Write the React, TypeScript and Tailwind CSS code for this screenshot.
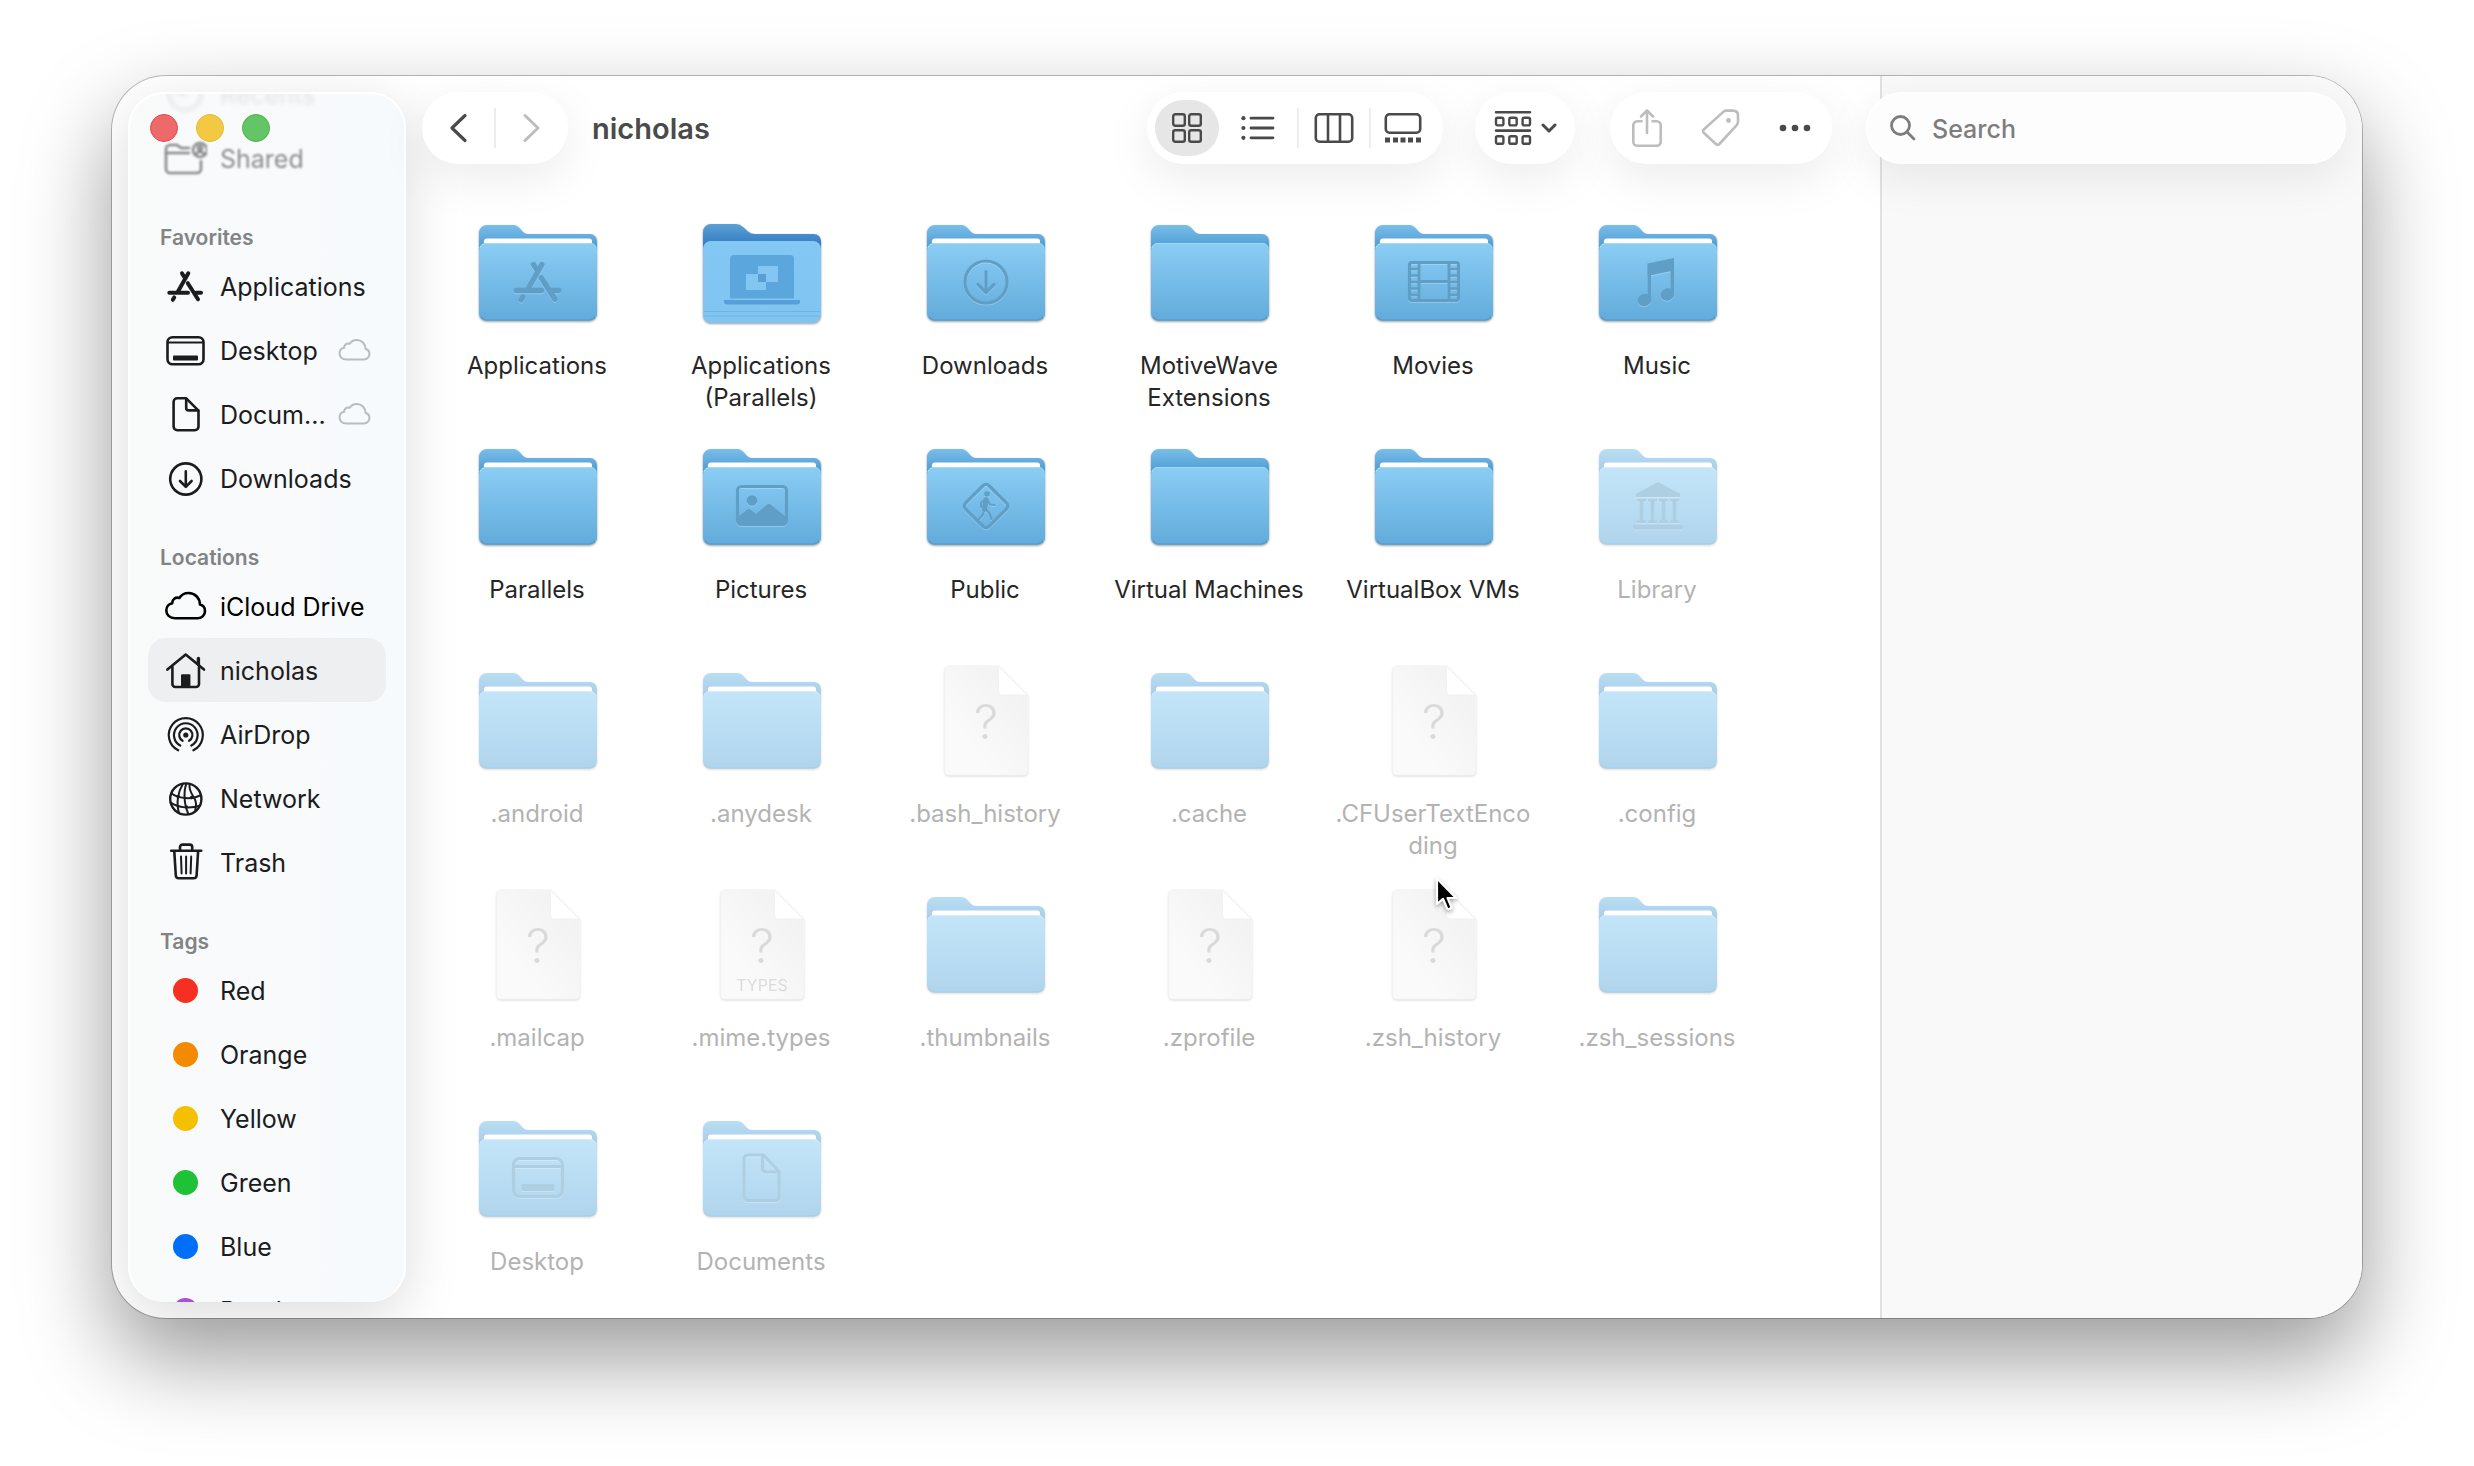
import React from 'react';

type GlyphName =
  | 'recents'
  | 'shared'
  | 'apps'
  | 'desktop'
  | 'document'
  | 'download'
  | 'cloud'
  | 'home'
  | 'airdrop'
  | 'network'
  | 'trash';

const glyphs: Record<GlyphName, React.ReactNode> = {
  recents: (
    <>
      <circle cx="22" cy="22" r="16" />
      <path d="M22 12v10h-8" />
    </>
  ),
  shared: (
    <>
      <path d="M26 12H18l-4-3H7a4 4 0 0 0-4 4v20a4 4 0 0 0 4 4h27a4 4 0 0 0 4-4V25" />
      <path d="M3 17h23" />
      <circle cx="37" cy="14" r="7" />
      <circle cx="37" cy="12" r="2" />
      <path d="M33 18c2-3 6-3 8 0" />
    </>
  ),
  apps: (
    <g strokeWidth="4">
      <path d="M25.3 9.3L14.7 28" />
      <path d="M19 9.3l2.7 4.2M24.8 19.2L35 35.3" />
      <path d="M6.3 28.7H25M33 28.7h5" />
      <path d="M11.2 33.4l-1.4 2.4" />
    </g>
  ),
  desktop: (
    <>
      <rect x="4.5" y="9.2" width="36" height="27" rx="5" />
      <path d="M5 14.6h35" strokeWidth="2" />
      <rect x="10" y="27.5" width="25" height="5" rx="1" fill="currentColor" stroke="none" />
    </>
  ),
  document: (
    <>
      <path d="M14.2 6.3h9L35.5 18.6v16a3.6 3.6 0 0 1-3.6 3.6H14.2a3.6 3.6 0 0 1-3.6-3.6V9.9a3.6 3.6 0 0 1 3.6-3.6z" />
      <path d="M23.2 6.8V16a2.4 2.4 0 0 0 2.4 2.4h9.6" />
    </>
  ),
  download: (
    <>
      <circle cx="22.8" cy="23" r="15.6" />
      <path d="M22.8 15.4v15M17 25l5.8 5.8 5.8-5.8" />
    </>
  ),
  cloud: (
    <path d="M12 34.2C6.5 34.2 3.3 30.6 3.3 26.6c0-4 2.7-6.8 5.9-7.4-.2-3.7 3.2-6.6 7.2-5.2C18.2 11 21.6 9 25.5 9 32 9 36.8 13.7 37 20.6c3 .7 5 3.4 5 6.6 0 3.8-3 7-7 7z" />
  ),
  home: (
    <>
      <path d="M4.4 21.6L22.7 6.6 41 21.6" />
      <path d="M9.4 19v17a3 3 0 0 0 3 3H33a3 3 0 0 0 3-3V19" />
      <path d="M35.4 10.5v6" strokeWidth="3.4" />
      <path d="M18 27.3a1 1 0 0 1 1-1h7.4a1 1 0 0 1 1 1V39H18z" fill="currentColor" stroke="none" />
    </>
  ),
  airdrop: (
    <g strokeWidth="2.2">
      <path d="M15.2 38.3a17 17 0 1 1 15.2 0" />
      <path d="M17.3 33.5a11.8 11.8 0 1 1 11 0" />
      <path d="M19.6 28.8a6.6 6.6 0 1 1 6.4 0" />
      <circle cx="22.8" cy="23" r="2.6" fill="currentColor" stroke="none" />
    </g>
  ),
  network: (
    <g strokeWidth="2">
      <circle cx="22.8" cy="23" r="15.6" strokeWidth="2.4" />
      <path d="M8.5 17.5c8 5.6 21 6 28.8 1.8" />
      <path d="M7.6 26.6c8 5.4 20 6.4 29.8 2.8" />
      <path d="M20 7.8c-5 7.8-7 19.4-4 29" />
      <path d="M23.4 7.6c-2.6 6.6-3 19.6 2 30.4" />
      <path d="M26.6 8c-1 6.6 2.8 10.6 5 14.6 1.8 3.6 2 7 .6 11.4" />
      <circle cx="15.2" cy="20.8" r="1.8" fill="currentColor" stroke="none" />
      <circle cx="28.6" cy="21.6" r="1.8" fill="currentColor" stroke="none" />
      <circle cx="23.4" cy="31" r="1.8" fill="currentColor" stroke="none" />
    </g>
  ),
  trash: (
    <>
      <path d="M8.2 10.7h30" />
      <path d="M17 10.4V7a2.4 2.4 0 0 1 2.4-2.4h7.4A2.4 2.4 0 0 1 29.2 7v3.4" />
      <path d="M11.3 11.5l1.5 24a3 3 0 0 0 3 2.8h14.8a3 3 0 0 0 3-2.8l1.5-24" />
      <path d="M18 16.6l.6 16.8M23.1 16.6v16.8M28.2 16.6l-.6 16.8" strokeWidth="2" />
    </>
  ),
};

function Glyph({ name, className }: { name: GlyphName; className: string }) {
  return (
    <svg
      viewBox="0 0 44 44"
      className={className}
      fill="none"
      stroke="currentColor"
      strokeWidth="2.6"
      strokeLinecap="round"
      strokeLinejoin="round"
      aria-hidden="true"
    >
      {glyphs[name]}
    </svg>
  );
}

type Emblem = 'apps' | 'download' | 'film' | 'music' | 'picture' | 'walk' | 'library' | 'desktop' | 'document';

const emblems: Record<Emblem, React.ReactNode> = {
  apps: (
    <g transform="translate(35 43) scale(1.34)" strokeWidth="4">
      <path d="M25.3 9.3L14.7 28M19 9.3l2.7 4.2M24.8 19.2L35 35.3M6.3 28.7H25M33 28.7h5M11.2 33.4l-1.4 2.4" />
    </g>
  ),
  download: (
    <>
      <circle cx="65" cy="73" r="21" />
      <path d="M65 62.5v20.5M57 75.5l8 8 8-8" />
    </>
  ),
  film: (
    <>
      <rect x="40.5" y="53.5" width="49" height="38" rx="2.5" />
      <path d="M50 54v37M80 54v37M50 72.5h30" />
      <path d="M41 60h9M41 66.5h9M41 73h9M41 79.5h9M41 86h9M80 60h9M80 66.5h9M80 73h9M80 79.5h9M80 86h9" strokeWidth="2.4" />
    </>
  ),
  music: (
    <g fill="currentColor" stroke="none">
      <path d="M54.5 54.5L81 49v12.5L54.5 67z" />
      <path d="M54.5 55H58v34h-3.5zM77.5 52H81v32h-3.5z" />
      <ellipse cx="51.5" cy="91" rx="7" ry="6" transform="rotate(-20 51.5 91)" />
      <ellipse cx="74.5" cy="85.5" rx="7" ry="6" transform="rotate(-20 74.5 85.5)" />
    </g>
  ),
  picture: (
    <>
      <rect x="40.5" y="53.5" width="49" height="38" rx="4" />
      <circle cx="55" cy="67.5" r="5.2" fill="currentColor" stroke="none" />
      <path
        d="M41 84l9.500-7.500q1.500-1 3 .2l5.500 4.300 11-9.200q2-1.400 4 0L89 84v5q0 2.500-2.500 2.500h-43Q41 91.500 41 89z"
        fill="currentColor"
        stroke="none"
      />
    </>
  ),
  walk: (
    <>
      <rect x="48.5" y="56.5" width="33" height="33" rx="4" transform="rotate(45 65 73)" />
      <circle cx="66" cy="61" r="2.8" fill="currentColor" stroke="none" />
      <path d="M65 67l-1.500 9" strokeWidth="5.5" />
      <path d="M64 66.500l-4 3v4.500M67 68l2 3.500 4.500.5" strokeWidth="2" />
      <path d="M63 77l-1 4.500-4 4.500M65 76.500l3.500 4 2 5.500" strokeWidth="2.4" />
    </>
  ),
  library: (
    <g fill="currentColor" stroke="none">
      <path d="M64 49.500q1-.6 2 0l21 11.500q1 2.500-1 3H44q-2-.5-1-3z" />
      <rect x="40" y="92" width="50" height="4.5" rx="2" />
      <path d="M44 66h9v2.500h-2.500v19H53V90h-9v-2.500h2.500v-19H44zM55 66h9v2.500h-2.500v19H64V90h-9v-2.500h2.500v-19H55zM66 66h9v2.500h-2.500v19H75V90h-9v-2.500h2.500v-19H66zM77 66h9v2.500h-2.500v19H86V90h-9v-2.500h2.500v-19H77z" />
    </g>
  ),
  desktop: (
    <>
      <rect x="40.5" y="53.5" width="49" height="38" rx="6.5" />
      <path d="M41 61.500h48" />
      <rect x="48.5" y="79" width="33" height="7" rx="1.5" fill="currentColor" stroke="none" />
    </>
  ),
  document: (
    <>
      <path d="M51 50h15.500L82 67v24.500a4 4 0 0 1-4 4H51a4 4 0 0 1-4-4V54a4 4 0 0 1 4-4z" />
      <path d="M65.500 50.500V64a3 3 0 0 0 3 3h13" />
    </>
  ),
};

const folderBack =
  'M6 24a8 8 0 0 1 8-8h26.500q3.500 0 6 3l3 3.500q2.500 2.500 5.500 2.500H117a7 7 0 0 1 7 7v40H6z';

function FolderArt({ emblem, empty }: { emblem?: Emblem; empty?: boolean }) {
  return (
    <>
      <path d={folderBack} fill="url(#folder-back)" />
      {!empty && <path d="M11 45V32.500a3 3 0 0 1 3-3h102a3 3 0 0 1 3 3V45z" fill="#fff" />}
      <rect x="6" y="34" width="118" height="77.5" rx="7" fill="url(#folder-front)" />
      <path d="M7 39q1-4.500 6-4.500h104q5 0 6 4.500" fill="none" stroke="#a5daf7" strokeWidth="1" />
      <path d="M8 107.500q2 3.500 6 3.500h102q4 0 6-3.500" fill="none" stroke="#4f9bcd" strokeWidth="1.2" />
      {emblem && (
        <g fill="none" strokeWidth="3.2" strokeLinecap="round" strokeLinejoin="round">
          <g className="text-white/25" stroke="currentColor" transform="translate(0 1)">
            {emblems[emblem]}
          </g>
          <g className="text-[#5f9fc7]" stroke="currentColor">
            {emblems[emblem]}
          </g>
        </g>
      )}
    </>
  );
}

function ParallelsArt() {
  return (
    <>
      <path
        d="M6 23a8 8 0 0 1 8-8h25q4 0 7 3l5 4.500q3 2.500 7 2.500h59a7 7 0 0 1 7 7v60H6z"
        fill="url(#parallels-back)"
      />
      <rect x="6" y="32" width="118" height="82" rx="8" fill="url(#parallels-front)" />
      <path d="M7 102.500h116M7 107h116" stroke="#6db5e6" strokeWidth="1.2" />
      <path d="M33 89.500V50a4 4 0 0 1 4-4h56a4 4 0 0 1 4 4v39.500z" fill="#5ca6de" />
      <path d="M27 91h76v1.500q0 3-3 3H30q-3 0-3-3z" fill="#569fd8" />
      <rect x="49" y="65" width="20" height="16" fill="#83c6f2" />
      <rect x="61" y="57" width="20" height="16" fill="#83c6f2" />
      <rect x="61" y="65" width="8" height="8" fill="#5a9fd4" />
    </>
  );
}

function FileArt({ ext }: { ext?: string }) {
  return (
    <>
      <path
        d="M28 9h49.500L106.500 38v76a4 4 0 0 1-4 4H28a4 4 0 0 1-4-4V13a4 4 0 0 1 4-4z"
        fill="url(#file-page)"
        stroke="#ededed"
        strokeWidth="1"
      />
      <path d="M77.500 9.500L106 38H81.500a4 4 0 0 1-4-4z" fill="#fff" stroke="#e6e6e6" strokeWidth="1" />
      <text x="65" y="82" textAnchor="middle" className="fill-[#b5b5b5] text-[48px] font-light">
        ?
      </text>
      {ext && (
        <text x="65" y="110" textAnchor="middle" className="fill-[#b9b9b9] text-[16px]">
          {ext}
        </text>
      )}
    </>
  );
}

interface Entry {
  name: string;
  kind?: 'folder' | 'parallels' | 'file';
  emblem?: Emblem;
  empty?: boolean;
  hidden?: boolean;
  ext?: string;
}

const entries: Entry[] = [
  { name: 'Applications', emblem: 'apps' },
  { name: 'Applications (Parallels)', kind: 'parallels' },
  { name: 'Downloads', emblem: 'download' },
  { name: 'MotiveWave Extensions', empty: true },
  { name: 'Movies', emblem: 'film' },
  { name: 'Music', emblem: 'music' },
  { name: 'Parallels' },
  { name: 'Pictures', emblem: 'picture' },
  { name: 'Public', emblem: 'walk' },
  { name: 'Virtual Machines', empty: true },
  { name: 'VirtualBox VMs' },
  { name: 'Library', emblem: 'library', hidden: true },
  { name: '.android', hidden: true },
  { name: '.anydesk', hidden: true },
  { name: '.bash_history', kind: 'file', hidden: true },
  { name: '.cache', hidden: true },
  { name: '.CFUserTextEncoding', kind: 'file', hidden: true },
  { name: '.config', hidden: true },
  { name: '.mailcap', kind: 'file', hidden: true },
  { name: '.mime.types', kind: 'file', hidden: true, ext: 'TYPES' },
  { name: '.thumbnails', hidden: true },
  { name: '.zprofile', kind: 'file', hidden: true },
  { name: '.zsh_history', kind: 'file', hidden: true },
  { name: '.zsh_sessions', hidden: true },
  { name: 'Desktop', emblem: 'desktop', hidden: true },
  { name: 'Documents', emblem: 'document', hidden: true },
];

function EntryTile({ entry }: { entry: Entry }) {
  return (
    <li className="h-[224px]">
      <button type="button" className="flex w-full flex-col items-center">
        <svg
          viewBox="0 0 128 128"
          className={
            entry.hidden
              ? 'size-32 opacity-50 drop-shadow-[0_1px_1px_rgba(0,0,0,0.3)]'
              : 'size-32 drop-shadow-[0_1px_1px_rgba(0,0,0,0.4)]'
          }
          aria-hidden="true"
        >
          {entry.kind === 'file' && <FileArt ext={entry.ext} />}
          {entry.kind === 'parallels' && <ParallelsArt />}
          {!entry.kind && <FolderArt emblem={entry.emblem} empty={entry.empty} />}
        </svg>
        <span
          className={
            entry.hidden
              ? 'mt-[13px] w-[196px] text-center text-[24px] leading-8 break-all text-[#b3b3b3]'
              : 'mt-[13px] w-[196px] text-center text-[24px] leading-8 text-[#262626]'
          }
        >
          {entry.name}
        </span>
      </button>
    </li>
  );
}

function Gradients() {
  const ramps = [
    { id: 'folder-back', from: '#78bee8', to: '#4593cf', y2: '0.5' },
    { id: 'folder-front', from: '#8acdf4', to: '#62abdb', y2: '1' },
    { id: 'parallels-back', from: '#5ca0d4', to: '#367fc4', y2: '0.25' },
    { id: 'parallels-front', from: '#83c8f5', to: '#80c4f1', y2: '1' },
  ];
  return (
    <svg className="absolute size-0" aria-hidden="true">
      <defs>
        {ramps.map((r) => (
          <linearGradient key={r.id} id={r.id} x1="0" y1="0" x2="0" y2={r.y2}>
            <stop offset="0" stopColor={r.from} />
            <stop offset="1" stopColor={r.to} />
          </linearGradient>
        ))}
        <linearGradient id="file-page" x1="1" y1="0" x2="0.3" y2="0.7">
          <stop offset="0" stopColor="#e2e2e2" />
          <stop offset="1" stopColor="#f6f6f6" />
        </linearGradient>
      </defs>
    </svg>
  );
}

interface PlaceProps {
  label: string;
  glyph: GlyphName;
  cloud?: boolean;
  selected?: boolean;
  className?: string;
}

function Place({ label, glyph, cloud, selected, className }: PlaceProps) {
  return (
    <li className={className}>
      <a
        href="#"
        aria-current={selected ? 'page' : undefined}
        className={
          selected
            ? 'flex h-16 items-center rounded-[18px] bg-[#eeeff0] px-[15px]'
            : 'flex h-16 items-center px-[15px]'
        }
      >
        <Glyph name={glyph} className="size-11 shrink-0" />
        <span className="ml-[13px] pt-[3px] whitespace-nowrap">{label}</span>
        {cloud && <Glyph name="cloud" className="ml-auto size-[34px] shrink-0 text-[#b9bcbe]" />}
      </a>
    </li>
  );
}

const tags = [
  { name: 'Red', color: 'bg-[#f53023]' },
  { name: 'Orange', color: 'bg-[#f48a00]' },
  { name: 'Yellow', color: 'bg-[#f4c000]' },
  { name: 'Green', color: 'bg-[#1fc136]' },
  { name: 'Blue', color: 'bg-[#006ff8]' },
  { name: 'Purple', color: 'bg-[#a850cf]' },
];

function SectionTitle({ children }: { children: React.ReactNode }) {
  return <h2 className="mt-8 px-3 text-[21px] leading-8 font-semibold text-[#828384]">{children}</h2>;
}

function Sidebar() {
  return (
    <nav
      aria-label="Sidebar"
      className="relative m-4 w-[278px] shrink-0 overflow-hidden rounded-[36px] border-2 border-b-0 border-white bg-linear-to-r from-[#f9fafa] to-[#f7fafd] px-[18px] text-[25px] text-[#1b1c1d] shadow-[0_14px_56px_rgba(0,0,0,0.14)]"
    >
      <div className="absolute top-5 left-5 z-10 flex gap-[18px]">
        <button type="button" aria-label="Close" className="size-7 rounded-full border border-[#e24b4b] bg-[#ee6a6a]" />
        <button type="button" aria-label="Minimize" className="size-7 rounded-full border border-[#e8b92e] bg-[#f3c944]" />
        <button type="button" aria-label="Zoom" className="size-7 rounded-full border border-[#43b545] bg-[#65c466]" />
      </div>

      {/* list is scrolled down a little, so the first rows fade out under the window buttons */}
      <ul className="-mt-8">
        <Place label="Recents" glyph="recents" className="opacity-10 blur-[2px]" />
        <Place label="Shared" glyph="shared" className="opacity-50 blur-[1px]" />
      </ul>

      <SectionTitle>Favorites</SectionTitle>
      <ul>
        <Place label="Applications" glyph="apps" />
        <Place label="Desktop" glyph="desktop" cloud />
        <Place label="Docum..." glyph="document" cloud />
        <Place label="Downloads" glyph="download" />
      </ul>

      <SectionTitle>Locations</SectionTitle>
      <ul>
        <Place label="iCloud Drive" glyph="cloud" className="text-black" />
        <Place label="nicholas" glyph="home" selected />
        <Place label="AirDrop" glyph="airdrop" />
        <Place label="Network" glyph="network" />
        <Place label="Trash" glyph="trash" />
      </ul>

      <SectionTitle>Tags</SectionTitle>
      <ul>
        {tags.map((tag) => (
          <li key={tag.name}>
            <a href="#" className="flex h-16 items-center px-[15px]">
              <span className="flex w-11 shrink-0 justify-center">
                <span className={`size-[25px] rounded-full ${tag.color}`} />
              </span>
              <span className="ml-[13px] pt-[3px]">{tag.name}</span>
            </a>
          </li>
        ))}
      </ul>
    </nav>
  );
}

const pill = 'flex h-[72px] items-center rounded-full bg-white shadow-[0_14px_48px_rgba(0,0,0,0.08)]';

function Divider() {
  return <span className="h-10 w-[2px] bg-[#ececec]" />;
}

function Toolbar() {
  return (
    <header className="relative flex items-center pt-4 pr-12 pl-4 text-[#4a4a4a]">
      <div className={`${pill} w-[146px]`}>
        <button type="button" aria-label="Back" className="flex h-full flex-1 items-center justify-center">
          <svg viewBox="0 0 18 30" className="h-[30px] w-[18px]" fill="none" stroke="currentColor" strokeWidth="3.2" strokeLinecap="round" strokeLinejoin="round">
            <path d="M16 2.500L3 15l13 12.500" />
          </svg>
        </button>
        <Divider />
        <button type="button" aria-label="Forward" className="flex h-full flex-1 items-center justify-center text-[#bdbdbd]">
          <svg viewBox="0 0 18 30" className="h-[30px] w-[18px]" fill="none" stroke="currentColor" strokeWidth="3" strokeLinecap="round" strokeLinejoin="round">
            <path d="M2 2.500L15 15 2 27.500" />
          </svg>
        </button>
      </div>

      <h1 className="ml-6 pt-[2px] text-[29px] font-semibold">nicholas</h1>

      <div className={`${pill} ml-auto px-2`}>
        <button type="button" aria-label="Icon view" aria-pressed="true" className="flex h-14 w-16 items-center justify-center rounded-full bg-[#e6e6e6]">
          <svg viewBox="0 0 32 32" className="size-8" fill="none" stroke="currentColor" strokeWidth="2.4">
            <rect x="2.2" y="2.2" width="11.6" height="11.6" rx="2" />
            <rect x="18.2" y="2.2" width="11.6" height="11.6" rx="2" />
            <rect x="2.2" y="18.2" width="11.6" height="11.6" rx="2" />
            <rect x="18.2" y="18.2" width="11.6" height="11.6" rx="2" />
          </svg>
        </button>
        <button type="button" aria-label="List view" className="flex h-14 w-[78px] items-center justify-center">
          <svg viewBox="0 0 34 26" className="h-[26px] w-[34px]" fill="currentColor" stroke="currentColor" strokeLinecap="round">
            <path d="M10 3.200h22M10 13h22M10 22.800h22" strokeWidth="2.8" />
            <g stroke="none">
              <circle cx="2.4" cy="3.2" r="2.1" />
              <circle cx="2.4" cy="13" r="2.1" />
              <circle cx="2.4" cy="22.8" r="2.1" />
            </g>
          </svg>
        </button>
        <Divider />
        <button type="button" aria-label="Column view" className="flex h-14 w-[70px] items-center justify-center">
          <svg viewBox="0 0 40 32" className="h-8 w-10" fill="none" stroke="currentColor" strokeWidth="2.6">
            <rect x="1.8" y="2.3" width="36.4" height="27.4" rx="3.8" />
            <path d="M14 2.500v27M26 2.500v27" />
          </svg>
        </button>
        <Divider />
        <button type="button" aria-label="Gallery view" className="flex h-14 w-16 items-center justify-center">
          <svg viewBox="0 0 38 32" className="h-8 w-[38px]" fill="none" stroke="currentColor" strokeWidth="2.6">
            <rect x="1.8" y="2.3" width="34.4" height="18.4" rx="3.8" />
            <path d="M1 28h5M9 28h5M16.500 28h5M24 28h5M32 28h5" strokeWidth="5" />
          </svg>
        </button>
      </div>

      <button type="button" aria-label="Group" className={`${pill} ml-8 w-[100px] justify-center gap-[9px]`}>
        <svg viewBox="0 0 38 36" className="h-9 w-[38px]" fill="none" stroke="currentColor" strokeWidth="2.4" strokeLinecap="round">
          <path d="M2 2.200h34M2 20.600h34" strokeWidth="2.6" />
          <rect x="2" y="7.8" width="7.4" height="7.6" rx="1.6" />
          <rect x="15.3" y="7.8" width="7.4" height="7.6" rx="1.6" />
          <rect x="28.6" y="7.8" width="7.4" height="7.6" rx="1.6" />
          <rect x="2" y="26.2" width="7.4" height="7.6" rx="1.6" />
          <rect x="15.3" y="26.2" width="7.4" height="7.6" rx="1.6" />
          <rect x="28.6" y="26.2" width="7.4" height="7.6" rx="1.6" />
        </svg>
        <svg viewBox="0 0 16 10" className="h-[10px] w-4" fill="none" stroke="currentColor" strokeWidth="3" strokeLinecap="round" strokeLinejoin="round">
          <path d="M2 2l6 6 6-6" />
        </svg>
      </button>

      <div className={`${pill} ml-[35px]`}>
        <button type="button" aria-label="Share" className="flex h-14 w-[74px] items-center justify-center text-[#bdbdbd]">
          <svg viewBox="0 0 32 40" className="h-10 w-8" fill="none" stroke="currentColor" strokeWidth="2.6" strokeLinecap="round" strokeLinejoin="round">
            <path d="M10.500 13.300H6.300a4 4 0 0 0-4 4v16.400a4 4 0 0 0 4 4h19.400a4 4 0 0 0 4-4V17.300a4 4 0 0 0-4-4h-4.200" />
            <path d="M16 25V2.500M10 8.500l6-6 6 6" />
          </svg>
        </button>
        <button type="button" aria-label="Edit tags" className="flex h-14 w-[74px] items-center justify-center text-[#bdbdbd]">
          <svg viewBox="0 0 40 40" className="size-10" fill="none" stroke="currentColor" strokeWidth="2.6" strokeLinejoin="round">
            <path d="M22.600 3.600q1.200-1 2.900-1H32q5 0 5 5v6.200q0 2-1.300 3.300L18.400 36q-1.800 1.800-3.600 0L3 25q-1.800-1.900 0-3.700z" />
            <circle cx="27.5" cy="12.5" r="2.4" fill="currentColor" stroke="none" />
          </svg>
        </button>
        <button type="button" aria-label="More" className="flex h-14 w-[74px] items-center justify-center">
          <svg viewBox="0 0 32 8" className="h-2 w-8" fill="currentColor">
            <circle cx="4" cy="4" r="3.3" />
            <circle cx="16" cy="4" r="3.3" />
            <circle cx="28" cy="4" r="3.3" />
          </svg>
        </button>
      </div>
    </header>
  );
}

function PreviewPane() {
  return (
    <aside className="w-[482px] shrink-0 border-l-2 border-[#e0e1e1] bg-[#f9f9f9] pt-4 pr-4">
      <label className="relative -ml-4 flex h-[72px] items-center rounded-full border-2 border-white bg-[#fdfdfd] pl-[22px] text-[#7d7d7d] shadow-[0_14px_48px_rgba(0,0,0,0.08)]">
        <svg viewBox="0 0 26 26" className="size-[26px]" fill="none" stroke="currentColor" strokeWidth="2.8" strokeLinecap="round" aria-hidden="true">
          <circle cx="10.5" cy="10.5" r="9" />
          <path d="M17.300 17.300l6.700 6.700" />
        </svg>
        <input
          type="text"
          aria-label="Search"
          placeholder="Search"
          className="ml-4 min-w-0 flex-1 bg-transparent pt-[3px] text-[25px] font-medium outline-none placeholder:text-[#7d7d7d]"
        />
      </label>
    </aside>
  );
}

function Pointer() {
  return (
    <svg
      viewBox="0 0 24 38"
      className="absolute top-[876px] left-[1434px] h-[38px] w-6 drop-shadow-[0_2px_2px_rgba(0,0,0,0.35)]"
      aria-hidden="true"
    >
      <path
        d="M3 2.500V28l6-5.200 4.200 9.800q2 1.200 4.400-1l-4-9.600H22z"
        fill="#000"
        stroke="#fff"
        strokeWidth="2.2"
        strokeLinejoin="round"
      />
    </svg>
  );
}

export default function App() {
  return (
    <div className="relative flex h-screen bg-white px-28 pt-[76px] pb-[148px] font-['Inter','Liberation_Sans',sans-serif]">
      <Gradients />
      <div className="flex min-w-0 flex-1 overflow-hidden rounded-[54px] bg-white shadow-[0_0_0_1px_rgba(0,0,0,0.25),0_40px_90px_rgba(0,0,0,0.4)]">
        <Sidebar />
        <main className="-ml-4 min-w-0 flex-1">
          <Toolbar />
          <ul className="mt-[45px] ml-[19px] grid grid-cols-[repeat(auto-fill,224px)]">
            {entries.map((entry) => (
              <EntryTile key={entry.name} entry={entry} />
            ))}
          </ul>
        </main>
        <PreviewPane />
      </div>
      <Pointer />
    </div>
  );
}
